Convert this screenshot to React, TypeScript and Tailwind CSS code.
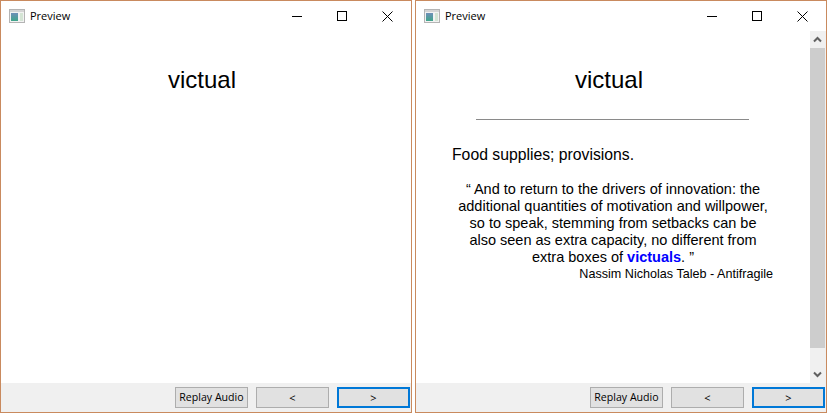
import React from "react";

function Win({ scroll, children }: { scroll?: boolean; children: React.ReactNode }) {
  return (
    <div className="w-[412px] h-[413px] border border-[#c98a5e] bg-white flex flex-col shrink-0">
      <div className="h-[30px] flex items-center shrink-0 relative">
        <svg width="16" height="14" viewBox="0 0 16 14" className="ml-[8px] mr-[5px]">
          <defs>
            <linearGradient id="ic" x1="0" y1="0" x2="0" y2="1">
              <stop offset="0" stopColor="#6f8fb8" />
              <stop offset="1" stopColor="#3fa58a" />
            </linearGradient>
          </defs>
          <rect x="0.5" y="0.5" width="15" height="13" fill="#f2f2f2" stroke="#b4b4b4" />
          <rect x="1" y="1" width="14" height="2" fill="#d4d4d4" />
          <rect x="2" y="4" width="7" height="8" fill="url(#ic)" />
          <rect x="11" y="4" width="3" height="8" fill="#d4e4d4" />
        </svg>
        <span className="text-[11px] text-black leading-none mb-[2px] font-['Open_Sans',sans-serif]">Preview</span>
        <svg width="11" height="11" viewBox="0 0 11 11" className="absolute left-[291px] top-[10px]">
          <path d="M0 5.5H10" stroke="#000" strokeWidth="1" />
        </svg>
        <svg width="11" height="11" viewBox="0 0 11 11" className="absolute left-[336px] top-[10px]">
          <rect x="0.5" y="0.5" width="9" height="9" fill="none" stroke="#000" />
        </svg>
        <svg width="11" height="11" viewBox="0 0 11 11" className="absolute left-[381px] top-[10px]">
          <path d="M0.5 0.5L10.5 10.5M10.5 0.5L0.5 10.5" stroke="#000" strokeWidth="1" />
        </svg>
      </div>
      <div className="flex-1 flex min-h-0">
        <div className="flex-1 min-w-0">{children}</div>
        {scroll && (
          <div className="w-[16px] bg-[#f0f0f0] flex flex-col items-start shrink-0">
            <div className="w-[15px] h-[17px] flex items-center justify-center shrink-0">
              <svg width="9" height="7" viewBox="0 0 9 7"><path d="M1 5.5L4.5 2L8 5.5" fill="none" stroke="#606060" strokeWidth="2" /></svg>
            </div>
            <div className="w-[15px] flex-1 bg-[#cdcdcd]" />
            <div className="w-[15px] h-[18px] shrink-0" />
            <div className="w-[15px] h-[17px] flex items-center justify-center shrink-0">
              <svg width="9" height="7" viewBox="0 0 9 7"><path d="M1 1.5L4.5 5L8 1.5" fill="none" stroke="#606060" strokeWidth="2" /></svg>
            </div>
          </div>
        )}
      </div>
      <div className="h-[29px] bg-[#f0f0f0] flex items-center justify-end gap-[8px] pr-px shrink-0">
        <button className="w-[73px] h-[21px] bg-[#e1e1e1] border border-[#adadad] text-[10.6px] text-black leading-none font-['Open_Sans',sans-serif]">Replay Audio</button>
        <button className="w-[73px] h-[21px] bg-[#e1e1e1] border border-[#adadad] text-[11px] text-black leading-none font-['Open_Sans',sans-serif]">&lt;</button>
        <button className="w-[73px] h-[21px] bg-[#e1e1e1] border-2 border-[#0078d7] text-[11px] text-black leading-none font-['Open_Sans',sans-serif]">&gt;</button>
      </div>
    </div>
  );
}

export default function App() {
  return (
    <div className="w-[828px] h-[414px] bg-white flex gap-[3px] overflow-hidden font-['Liberation_Sans',Arial,sans-serif]">
      <Win>
        <div className="text-center text-[24px] leading-[28px] text-black mt-[35px] pr-[8px]">victual</div>
      </Win>
      <Win scroll>
        <div className="flex flex-col items-center">
          <div className="text-center text-[24px] leading-[28px] text-black mt-[35px] pr-[8px]">victual</div>
          <div className="w-[273px] h-px bg-[#8a8a8a] mt-[25px] mr-px" />
          <div className="self-start ml-[36px] mt-[26px] text-[15.75px] leading-[18px] text-black">Food supplies; provisions.</div>
          <div className="w-[312px] mt-[17px] text-center text-[14.5px] leading-[17px] text-black">
            “ And to return to the drivers of innovation: the additional quantities of motivation and willpower, so to speak, stemming from setbacks can be also seen as extra capacity, no different from extra boxes of <b className="text-[#0000ff]">victuals</b>. ”
          </div>
          <div className="self-end mr-[37px] mt-px text-[12.6px] leading-[14px] text-black">Nassim Nicholas Taleb - Antifragile</div>
        </div>
      </Win>
    </div>
  );
}
